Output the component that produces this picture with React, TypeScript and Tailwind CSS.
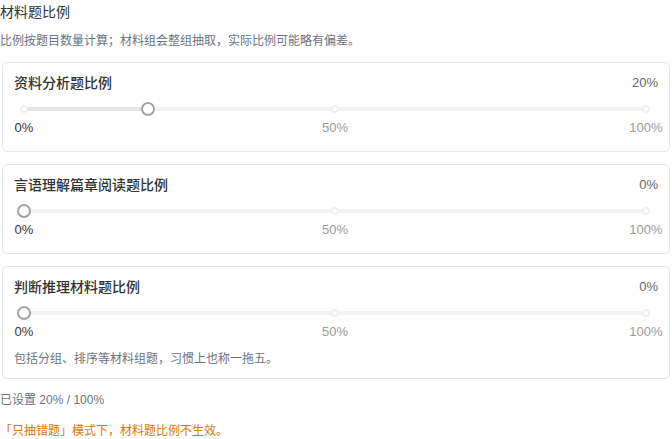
import React from 'react';

type Ratio = {
  label: string;
  value: number;
  note?: string;
};

const ratios: Ratio[] = [
  { label: '资料分析题比例', value: 20 },
  { label: '言语理解篇章阅读题比例', value: 0 },
  { label: '判断推理材料题比例', value: 0, note: '包括分组、排序等材料组题，习惯上也称一拖五。' },
];

const marks = [0, 50, 100];

const RatioSlider: React.FC<{ value: number }> = ({ value }) => (
  <div className="ml-[10px] mr-[12px]">
    <div className="relative flex h-[14px] items-center">
      <div className="h-[4px] w-full rounded-full bg-[#f2f2f2]">
        <div className="h-full rounded-full bg-[#e3e3e3]" style={{ width: `${value}%` }} />
      </div>
      {marks.map((m) => (
        <div
          key={m}
          className="absolute top-[3px] h-[8px] w-[8px] -translate-x-1/2 rounded-full border-2 border-[#f0f0f0] bg-white"
          style={{ left: `${m}%` }}
        />
      ))}
      <div
        className="absolute top-0 h-[14px] w-[14px] -translate-x-1/2 rounded-full border-2 border-[#a3a3a3] bg-white"
        style={{ left: `${value}%` }}
      />
    </div>
    <div className="relative mt-[4px] h-[16px] text-[13px] leading-[16px]">
      {marks.map((m) => (
        <span
          key={m}
          className={`absolute top-0 -translate-x-1/2 whitespace-nowrap ${m <= value ? 'text-[#333333]' : 'text-[#9a9a9a]'}`}
          style={{ left: `${m}%` }}
        >
          {m}%
        </span>
      ))}
    </div>
  </div>
);

const App: React.FC = () => {
  const total = ratios.reduce((s, r) => s + r.value, 0);
  return (
    <div
      className="w-[672px] bg-white pt-[2px] text-[#333333]"
      style={{ fontFamily: '"Liberation Sans", "Noto Sans CJK SC", sans-serif' }}
    >
      <p className="text-[14px] leading-[20px] text-[#333333]">材料题比例</p>
      <p className="mt-[10px] text-[12px] leading-[18px] text-[#6b7280]">
        比例按题目数量计算；材料组会整组抽取，实际比例可能略有偏差。
      </p>
      <div className="mx-[2px] mt-[12px] flex flex-col gap-[12px]">
        {ratios.map((r) => (
          <div key={r.label} className="rounded-[5px] border border-[#e3e6ea] px-[11px] pb-[15px] pt-[11px]">
            <div className="flex items-center justify-between leading-[18px]">
              <span className="text-[14px] font-medium text-[#333333]">{r.label}</span>
              <span className="text-[13px] text-[#666666]">{r.value}%</span>
            </div>
            <div className="mt-[10px]">
              <RatioSlider value={r.value} />
            </div>
            {r.note && (
              <p className="mb-[-5px] mt-[10px] text-[12px] leading-[18px] text-[#6b7280]">{r.note}</p>
            )}
          </div>
        ))}
      </div>
      <p className="mt-[12px] text-[12px] leading-[18px] text-[#6b7280]">已设置 {total}% / 100%</p>
      <p className="mt-[13px] text-[12px] leading-[18px] text-[#d97706]">「只抽错题」模式下，材料题比例不生效。</p>
    </div>
  );
};

export default App;
